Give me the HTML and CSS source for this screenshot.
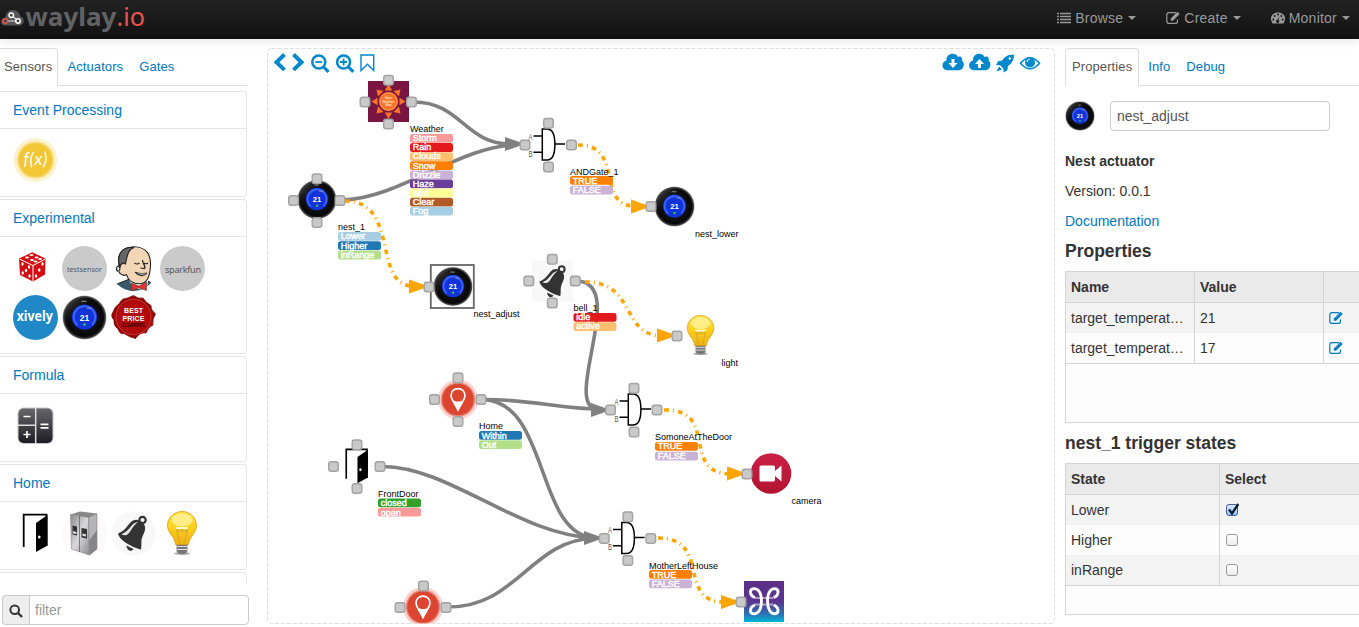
FILE: index.html
```html
<!DOCTYPE html>
<html lang="en">
<head>
<meta charset="utf-8">
<title>waylay.io</title>
<link rel="stylesheet" href="styles.css">
</head>
<body>
<svg class="defs" width="0" height="0" aria-hidden="true">
  <defs>
    <linearGradient id="gGlass" x1="0" y1="0" x2="0" y2="1"><stop offset="0" stop-color="#ffe24d"/><stop offset=".45" stop-color="#ffd21f"/><stop offset="1" stop-color="#efb010"/></linearGradient>
    <linearGradient id="gCalc" x1="0" y1="0" x2="0" y2="1"><stop offset="0" stop-color="#66666b"/><stop offset="1" stop-color="#1c1c22"/></linearGradient>
    <linearGradient id="gSteel" x1="0" y1="0" x2="1" y2="1"><stop offset="0" stop-color="#8a8a8c"/><stop offset=".5" stop-color="#d9d9db"/><stop offset="1" stop-color="#8b8b8d"/></linearGradient>
    <linearGradient id="gGift" x1="0" y1="0" x2="0" y2="1"><stop offset="0" stop-color="#5c2e87"/><stop offset=".5" stop-color="#5a3590"/><stop offset=".8" stop-color="#2e72b4"/><stop offset="1" stop-color="#00b6d9"/></linearGradient>
    <linearGradient id="gCam" x1="0" y1="0" x2="0" y2="1"><stop offset="0" stop-color="#cc2046"/><stop offset="1" stop-color="#b0142f"/></linearGradient>
    <radialGradient id="gNest"><stop offset="0" stop-color="#222"/><stop offset=".86" stop-color="#070707"/><stop offset=".95" stop-color="#444"/><stop offset="1" stop-color="#b5b5b5"/></radialGradient>
    <linearGradient id="gShine" x1="0" y1="0" x2="1" y2="1"><stop offset="0" stop-color="#888" stop-opacity=".75"/><stop offset=".4" stop-color="#222" stop-opacity="0"/></linearGradient>
    <radialGradient id="gSeal"><stop offset="0" stop-color="#c81414"/><stop offset="1" stop-color="#8f0606"/></radialGradient>

    <symbol id="nest" viewBox="0 0 45 45">
      <circle cx="22.5" cy="22.5" r="22" fill="url(#gNest)"/>
      <circle cx="22" cy="22" r="19.5" fill="url(#gShine)"/>
      <circle cx="22.5" cy="22" r="12.6" fill="#1233d8"/>
      <circle cx="22.5" cy="22" r="10.8" fill="none" stroke="#3a62ff" stroke-width="2" stroke-dasharray="52 16" transform="rotate(130 22.5 22)"/>
      <path d="M19.500 6.300h5M25 13.200h4.500" stroke="#999" stroke-width="1"/>
      <text x="22.5" y="25.5" class="nest-num">21</text>
      <circle cx="22.5" cy="29.5" r="1.3" fill="#35d045"/>
    </symbol>
    <symbol id="bulb" viewBox="0 0 45 45">
      <ellipse cx="22" cy="42.500" rx="8" ry="1.500" fill="#aaa"/>
      <path d="M16.500 33h11v7q-1 3-5.500 3t-5.500-3z" fill="#777"/>
      <path d="M16.500 35.500h11M16.500 38.500h11" stroke="#ddd" stroke-width="1"/>
      <path d="M22 .5C13.500 .5 7.500 7 7.500 14.500c0 8 7.500 11 8 19h13c.5-8 8-11 8-19C36.500 7 30.500 .5 22 .5z" fill="url(#gGlass)" stroke="#d9a010" stroke-width=".8"/>
      <ellipse cx="22" cy="9" rx="10.500" ry="6.500" fill="#fff5a5" opacity=".75"/>
      <path d="M19.500 32L16.500 18l3.500 3 2-3 2 3 3.500-3-3 14" fill="none" stroke="#c8a63a" stroke-width="1"/>
      <path d="M16 17h12" stroke="#fffad0" stroke-width="2"/>
    </symbol>
    <symbol id="bell" viewBox="0 0 45 45">
      <circle cx="31.500" cy="9" r="3.200" fill="none" stroke="#333" stroke-width="2.200"/>
      <path d="M7 22.500C13 20 15 17 18.500 12.500 22 8 27 7.500 31.500 11.500 36 16 34 20 31.500 25.500 29.500 30 31 34 30 38.500 23 37 8.500 30 7 22.500z" fill="#333"/>
      <path d="M10.500 23.200C16 21 18 17.500 22 13.200 24 11.500 26 11 27 11.200 23.500 13 20.500 18.500 18 22c-2 2.500-5 3-7.500 1.200z" fill="#e9e9e9"/>
      <path d="M15.500 34.500l7 3.500c-2 3.500-7 1.500-7-3.500z" fill="#333"/>
    </symbol>
    <symbol id="door" viewBox="0 0 45 45">
      <path d="M10.700 36V3.700H33.500V35" fill="none" stroke="#000" stroke-width="1.800"/>
      <path d="M23 12L34.500 4v30.500L23 41z" fill="#000"/><ellipse cx="26.300" cy="26" rx="1.300" ry="1.600" fill="#fff"/>
    </symbol>
    <symbol id="pin" viewBox="0 0 45 45">
      <circle cx="22.500" cy="22.500" r="22" fill="#f8d5d1"/><circle cx="22.500" cy="22.500" r="19" fill="#ec8b7f"/><circle cx="22.500" cy="22.500" r="17.300" fill="#dc452f"/>
      <path d="M22.500 10.500c-4.500 0-7.600 3.300-7.600 7.400 0 4.800 4 8.600 7.600 16.300 3.600-7.700 7.600-11.500 7.600-16.300 0-4.100-3.100-7.400-7.600-7.400z" fill="#dc452f" stroke="#fff" stroke-width="1.800"/>
      <path d="M16.500 22.500c2 3 10 3 12 0l-6 11.500z" fill="#fff"/>
    </symbol>
    <symbol id="gate" viewBox="-25 -25 50 50">
      <path d="M-6.700 -15.500H-2C3.500 -15.500 5.900 -9 5.900 0S3.500 15.500 -2 15.500H-6.700z" fill="#fff" stroke="#000" stroke-width="1.500"/>
      <path d="M-15.500 -8.500h9M-15.500 7.800h9M6 -.5h10" stroke="#000" stroke-width="1.500"/>
      <text x="-20.500" y="-5" class="pin-name" textLength="4" lengthAdjust="spacingAndGlyphs">A</text><text x="-20.500" y="12" class="pin-name" textLength="4" lengthAdjust="spacingAndGlyphs">B</text>
    </symbol>
    <symbol id="edit" viewBox="0 0 14 14">
      <path d="M10 1.700H3Q.8 1.700 .8 3.900V10.200Q.8 12.400 3 12.400H9.300Q11.500 12.400 11.500 10.200V8.500" fill="none" stroke="currentColor" stroke-width="1.200"/>
      <path d="M4.800 9.700V7.400L11.500 .7l2.200 2.200L7 9.700z" fill="currentColor"/><path d="M6.300 7.300l4.500-4.500" stroke="#fff" stroke-opacity=".5" stroke-width=".6"/>
    </symbol>
    <g id="port"><rect x="-4.800" y="-4.800" width="9.600" height="9.600" rx="2.500" fill="#c9c9c9" stroke="#a3a3a3" stroke-width="1.400"/></g>
    <g id="ports4"><use href="#port" x="-23.500"/><use href="#port" y="-21.700"/><use href="#port" x="23"/><use href="#port" y="22"/></g>
    <path id="head" d="M-20 -7V7L0 0z"/>
    <clipPath id="round"><circle cx="22.500" cy="22.500" r="22.500"/></clipPath>
  </defs>
</svg>

<header class="navbar">
  <svg class="logo" width="160" height="38" viewBox="0 0 160 38">
    <path d="M5 25.500C-.5 25.500 0 18 5.500 17.800 5.500 13 9 9.800 13 10c4 .1 6.800 3 7.300 6.500 5 1 4.400 9-1.800 9z" fill="#56565a"/>
    <path d="M5 21h13M11.500 15.500l6.500 5" stroke="#ddd" stroke-width="1.200"/>
    <circle cx="11.300" cy="15.200" r="2.200" fill="#444" stroke="#fff" stroke-width="1.500"/><circle cx="18" cy="21" r="2.200" fill="#444" stroke="#fff" stroke-width="1.500"/><circle cx="5.200" cy="21" r="2.300" fill="#444" stroke="#ee524f" stroke-width="1.500"/>
    <text x="25.500" y="25.500" class="brand" textLength="91" lengthAdjust="spacingAndGlyphs">waylay</text>
    <text x="116.500" y="25.500" class="brand-io" textLength="28.500" lengthAdjust="spacingAndGlyphs">.io</text>
  </svg>
  <nav class="menu">
    <a class="menu-item"><svg width="14" height="12" viewBox="0 0 14 12"><path d="M0 1.500h2M3 1.500h11M0 4.500h2M3 4.500h11M0 7.500h2M3 7.500h11M0 10.500h2M3 10.500h11" stroke="currentColor" stroke-width="1.700"/></svg><span>Browse</span><i class="caret"></i></a>
    <a class="menu-item"><svg width="14" height="14"><use href="#edit"/></svg><span>Create</span><i class="caret"></i></a>
    <a class="menu-item"><svg width="14" height="14" viewBox="0 0 14 14"><path d="M1.500 12.500C-3.200 4 4 1.500 7 1.500s10.200 2.500 5.500 11z" fill="currentColor"/><g fill="#1b1b1b"><circle cx="2.300" cy="8.500" r="1"/><circle cx="3.700" cy="5" r="1"/><circle cx="7" cy="3.500" r="1"/><circle cx="10.400" cy="5" r="1"/><circle cx="11.700" cy="8.500" r="1"/><path d="M8.500 5l-1 4a1.600 1.600 0 1 1-1-.2z"/></g></svg><span>Monitor</span><i class="caret"></i></a>
  </nav>
</header>

<main class="workspace">
  <aside class="library">
    <div class="tabs"><a class="tab active">Sensors</a><a class="tab">Actuators</a><a class="tab">Gates</a></div>
    <div class="groups">
      <section class="group">
        <h4>Event Processing</h4>
        <div class="icons">
          <svg viewBox="0 0 45 45"><circle cx="22.500" cy="22" r="22" fill="#fcf2cf"/><circle cx="22.500" cy="22" r="18.600" fill="#f7dd7d"/><circle cx="22.500" cy="22" r="16.800" fill="#f2c634"/><text x="22.500" y="27" class="fx" textLength="24">f(x)</text></svg>
        </div>
      </section>
      <section class="group">
        <h4>Experimental</h4>
        <div class="icons">
          <svg viewBox="0 0 45 45"><path d="M19.300 6.300L32.500 12.500 32 28.500 20 35.500 7 29 6 12.500z" fill="#d40d12"/><path d="M6.500 13L20 19.500V35M20 19.500L32.300 13" fill="none" stroke="#fff" stroke-width="1"/><g fill="#fff"><ellipse cx="14" cy="11.500" rx="2" ry="1"/><ellipse cx="18.500" cy="9" rx="2" ry="1"/><ellipse cx="19" cy="14" rx="2" ry="1"/><ellipse cx="23.500" cy="11.500" rx="2" ry="1"/><ellipse cx="22.500" cy="15.500" rx="2" ry="1"/><ellipse cx="27" cy="13" rx="2" ry="1"/><ellipse cx="9.500" cy="18" rx="1.200" ry="1.800"/><ellipse cx="16" cy="21" rx="1.200" ry="1.800"/><ellipse cx="13" cy="24.500" rx="1.200" ry="1.800"/><ellipse cx="9.700" cy="27" rx="1.200" ry="1.800"/><ellipse cx="16.500" cy="30" rx="1.200" ry="1.800"/><ellipse cx="29.500" cy="18" rx="1.200" ry="1.800"/><ellipse cx="26.300" cy="24" rx="1.200" ry="1.800"/><ellipse cx="23" cy="30" rx="1.200" ry="1.800"/></g></svg>
          <svg viewBox="0 0 45 45"><circle cx="22.500" cy="22.500" r="22.500" fill="#cacaca"/><text x="22.500" y="25.500" class="round-label tiny" textLength="35">testsensor</text></svg>
          <svg viewBox="0 0 45 45"><g clip-path="url(#round)"><path d="M3 45l3-7 10-4 6-2 15 3 8 5v6z" fill="#37596b" stroke="#222"/><path d="M18 34l5 9h13l1-9z" fill="#fff"/><path d="M9 23C4 8 12 1 23 .8c13 0 17 9 16.500 18-.3 12-4 19-11 19-6 0-11-3-13-9-5 2-9.500-3-6.500-5.800z" fill="#f3d6b5" stroke="#222" stroke-width="1.100"/><path d="M8.500 20C6 11 9 3 18 1.500l5 0C17 4 17 8 15.500 13l-1 5-2.500-1z" fill="#666" stroke="#222" stroke-width="1.100"/><path d="M10 21c-4-3-6 2-3 4.500M23.500 17q2.500 2 5 0M33 17q2 1.500 4 0M31.500 14c0 4 4 7 2 8.500l-4-.5M24 26c3 4 9 5 12 1" fill="none" stroke="#222" stroke-width="1.200"/><path d="M25 26.500q6 2 11 .5-4 4.500-11-.5z" fill="#fff" stroke="#222" stroke-width=".7"/></g><path d="M20.500 37l7.500 3 7.500-4v8.500l-7.500-2.500-7.500 3z" fill="#e33232" stroke="#333" stroke-width=".5"/></svg>
          <svg viewBox="0 0 45 45"><circle cx="22.500" cy="22.500" r="22.500" fill="#cacaca"/><text x="23" y="26.800" class="round-label" textLength="36">sparkfun</text></svg>
          <svg viewBox="0 0 45 45"><circle cx="22.500" cy="22.500" r="22.500" fill="#2188c7"/><text x="21.700" y="26" class="xively" textLength="36" lengthAdjust="spacingAndGlyphs">xively</text></svg>
          <svg><use href="#nest"/></svg>
          <svg viewBox="0 0 45 45"><path d="M22.500 .5Q27 4 32 3 35 8 40 10.500 39.500 15 44.500 19 41 24 42 30 37 32 35 38 29 37 24.500 43.500 18 42 13 38.500 9 40 7 34 2 30 3 25-1 21 2 17 4 11 8 9 11 3 15 3.500 19 2 22.500 .5z" fill="url(#gSeal)" stroke="#7a0505" stroke-width=".7"/><circle cx="22.500" cy="22" r="17.500" fill="none" stroke="#d43a3a" stroke-width="1"/><circle cx="22.500" cy="22" r="16" fill="#b30b0b"/><text x="22.500" y="18.300" class="seal" textLength="19">BEST</text><text x="22.500" y="25.500" class="seal" textLength="22">PRICE</text><text x="22.500" y="31.500" class="seal small" textLength="23">GUARANTEE</text></svg>
        </div>
      </section>
      <section class="group">
        <h4>Formula</h4>
        <div class="icons">
          <svg viewBox="0 0 45 45"><rect x="4.500" y="4.500" width="36" height="36.500" rx="6" fill="#c9c9cb"/><rect x="5.500" y="5.500" width="34" height="34.500" rx="5" fill="url(#gCalc)"/><path d="M22.700 5v36M5 22.200h17.700" stroke="#ddd" stroke-width="1.500"/><path d="M10.500 13.500h7M10.500 31.500h7M14 28v7M27.500 21.300h8M27.500 24.800h8" stroke="#fff" stroke-width="1.700"/></svg>
        </div>
      </section>
      <section class="group">
        <h4>Home</h4>
        <div class="icons">
          <svg><use href="#door"/></svg>
          <svg viewBox="0 0 45 45"><circle cx="22.500" cy="22.500" r="22.500" fill="#fcfafa"/><path d="M8.500 3.500L18 .5l17 2-8.500 4z" fill="#888"/><path d="M8.500 3.500L26.500 6.500 27.500 44 9.500 38z" fill="url(#gSteel)" stroke="#777" stroke-width=".5"/><path d="M26.500 6.500L35 2.500v35.500l-7.500 6z" fill="#b4b4b6" stroke="#777" stroke-width=".5"/><path d="M27 30l8-11v19l-7.500 6z" fill="#858588"/><path d="M17.500 5v36" stroke="#666" stroke-width=".8"/><path d="M10.500 14.500l4.500 1v9l-4.500-1zM19.500 17l5.500 1v9.500l-5.500-1z" fill="#333"/><path d="M11 20l3.500 1v2l-3.500-.5zM20.500 22.500l3.500.8v2.200l-3.500-.6z" fill="#ddd"/></svg>
          <svg viewBox="0 0 45 45"><circle cx="22.500" cy="22.500" r="22.200" fill="#f8f8f8"/><use href="#bell" width="45" height="45"/></svg>
          <svg><use href="#bulb"/></svg>
        </div>
      </section>
      <section class="group"><h4></h4></section>
    </div>
    <div class="filter"><span class="addon"><svg width="14" height="14" viewBox="0 0 14 14"><circle cx="5.700" cy="5.700" r="4.300" fill="none" stroke="#333" stroke-width="2"/><path d="M9 9l4 4" stroke="#333" stroke-width="2.400"/></svg></span><input type="text" placeholder="filter"></div>
  </aside>

  <svg class="canvas" width="788" height="576" viewBox="267 48 788 576">
    <rect x="267.500" y="48.500" width="787" height="575" rx="4" class="frame"/>
    <g class="tools">
      <path d="M284.500 54.500L276.500 62.200l8 7.700M293.500 54.500l8 7.700-8 7.700" stroke-width="4"/>
      <circle cx="318.800" cy="62" r="6.500" stroke-width="2.500"/><path d="M323.500 66.800l5 5" stroke-width="3.200"/><path d="M315.300 62h7" stroke-width="1.800"/>
      <circle cx="343.600" cy="62" r="6.500" stroke-width="2.500"/><path d="M348.300 66.800l5 5" stroke-width="3.200"/><path d="M340 62h7.200M343.600 58.400v7.200" stroke-width="1.800"/>
      <path d="M361 55h12.700v15.500l-6.300-6.200-6.400 6.200z" stroke-width="1.400"/>
    </g>
    <g class="solid">
      <path id="cloud" d="M947.500 70.200c-6.500 0-6.500-8.500-1-9.700C945.500 53 956 51.500 957.800 57c3-1.500 5 1 4.300 3.800 3.200 2 1.800 9.400-3 9.400z"/>
      <use href="#cloud" x="26.600"/>
      <path d="M951.500 59h3v4h3l-4.500 5-4.500-5h3zM978 68h3v-4h3l-4.500-5-4.500 5h3z" fill="#fff"/>
      <path d="M1014 54.500c-7-.3-9.500 3-12 6l-4 .8-2 3.700 4 .2 3.300 3.300.4 4 3.600-2.200.6-4c3-2.500 6.200-5.500 6.100-11.800zm-3 4a1.200 1.200 0 1 1 0-.1zM996.500 71.500l2.500-5 3 3z"/>
      <path d="M1020.500 63.200q9.500-11 19 0-9.500 11-19 0z" fill="#fff" stroke="#0088cc" stroke-width="1.600"/><circle cx="1030" cy="62.500" r="5"/><path d="M1027 62q.2-2.600 2.800-2.800" fill="none" stroke="#fff" stroke-width="1"/>
    </g>

    <g class="sprites">
      <rect x="368" y="81" width="41" height="41" fill="#7a1440"/>
      <g transform="translate(388.500 101.500)"><g fill="#fb7328"><path id="rays" d="M-3.800-11L0-17 3.800-11zM-3.800 11L0 17 3.800 11zM-11-3.800L-17 0-11 3.800zM11-3.800L17 0 11 3.800z"/><use href="#rays" transform="rotate(45)"/></g><circle r="10" fill="#fb7328" stroke="#7a1440" stroke-width="1"/><circle r="8.600" fill="none" stroke="#ffad78" stroke-width=".6"/><text class="owm" y="-2.200">Open</text><text class="owm" y="1">Weather</text><text class="owm" y="4.200">Map</text></g>
      <use href="#nest" x="297" y="179.500" width="40" height="40"/>
      <use href="#nest" x="654" y="186" width="41" height="41"/>
      <use href="#gate" x="524" y="119.500" width="50" height="50"/>
      <use href="#gate" x="610" y="384.500" width="50" height="50"/>
      <use href="#gate" x="603.500" y="513" width="50" height="50"/>
      <rect x="532" y="260.500" width="41" height="41" fill="#f8f8f8"/><use href="#bell" x="533" y="261" width="41" height="41"/>
      <use href="#bulb" x="680.500" y="315" width="41" height="41"/>
      <use href="#pin" x="437.500" y="379" width="41" height="41"/>
      <svg x="395" y="580" width="60" height="43.500" viewBox="395 580 60 43.500"><use href="#pin" x="402.500" y="586.500" width="41" height="41"/></svg>
      <use href="#door" x="336.500" y="446" width="41" height="41"/>
      <circle cx="771" cy="473.500" r="20.300" fill="url(#gCam)"/><path d="M761 465.500h12.500q1.500 0 1.500 1.500v4l6.500-5.500v16l-6.500-5.500v4q0 1.500-1.500 1.500h-12.500q-1.500 0-1.500-1.500v-13q0-1.500 1.500-1.500z" fill="#fff"/>
      <rect x="744" y="581" width="40" height="41" fill="url(#gGift)"/>
      <g fill="none" stroke="#fff" stroke-width="2.800"><path d="M755 598h18M755 604.500h18" opacity=".5" stroke-width="2"/><path d="M761.500 601C761.500 593 758.500 588.500 753.500 588.700c-4.500 .8-4 7 1.500 8.800M761.500 601C761.500 609 758.500 614 753.500 613.800c-4.500-.8-4-7 1.500-8.800M767.500 601C767.500 593 770.500 588.500 775 588.700c4.500 .8 4 7-1.500 8.800M767.500 601C767.500 609 770.500 614 775 613.800c4.500-.8 4-7-1.500-8.800"/></g>
      <rect x="430.800" y="265" width="43" height="43" fill="#fff" stroke="#666" stroke-width="1.800"/><use href="#nest" x="433" y="266.500" width="40" height="40"/>
    </g>

    <g class="flow">
      <path d="M414 102C460 102 466 144 510 144"/><path d="M343 200C400 198 460 146 515 145"/>
      <path d="M577 281C630 283 558 410 600 410"/><path d="M483 399.500C530 399 560 409 600 409"/>
      <path d="M483 399.500C550 402 535 535 595 538"/><path d="M383 466.500C450 467 520 536 595 538"/><path d="M448 607C518 607 530 540 595 538"/>
    </g>
    <g fill="#808080"><use href="#head" x="525" y="144"/><use href="#head" x="611" y="410"/><use href="#head" x="604" y="538"/></g>
    <g class="act">
      <path d="M345 201C400 201 372 284 412 286"/><path d="M578 145C625 145 595 206 635 206"/><path d="M585 282C637 282 620 335 662 336"/><path d="M664 410C720 409 680 473 730 474"/><path d="M658 538C712 538 676 602 724 602"/>
    </g>
    <g fill="#ffa500"><use href="#head" x="429" y="286.500"/><use href="#head" x="651" y="206.500"/><use href="#head" x="677" y="335.500"/><use href="#head" x="747" y="473.500"/><use href="#head" x="741" y="602"/></g>

    <g class="ports">
      <use href="#ports4" x="388.500" y="102"/><use href="#ports4" x="317" y="200.500"/><use href="#ports4" x="548.500" y="145"/><use href="#ports4" x="552.300" y="281"/><use href="#ports4" x="634" y="410"/><use href="#ports4" x="458" y="399.500"/><use href="#ports4" x="357" y="466.500"/><use href="#ports4" x="627.800" y="538.500"/>
      <use href="#port" x="400" y="607.500"/><use href="#port" x="423.500" y="586"/><use href="#port" x="446" y="607.500"/>
      <use href="#port" x="651" y="206.500"/><use href="#port" x="429" y="287"/><use href="#port" x="677" y="336"/><use href="#port" x="747" y="474"/><use href="#port" x="741" y="602"/>
    </g>

    <g class="tags">
      <g transform="translate(410 134)"><rect fill="#fb9a99"/><rect y="9.100" fill="#e31a1c"/><rect y="18.200" fill="#fdbf6f"/><rect y="27.300" fill="#ff7f00"/><rect y="36.400" fill="#cab2d6"/><rect y="45.500" fill="#6a3d9a"/><rect y="54.600" fill="#ffff99"/><rect y="63.700" fill="#b15928"/><rect y="72.800" fill="#a6cee3"/>
        <text y="7">Storm</text><text y="16.100">Rain</text><text y="25.200">Clouds</text><text y="34.900">Snow</text><text y="43.600">Drizzle</text><text y="52.900">Haze</text><text y="62">Mist</text><text y="71">Clear</text><text y="80">Fog</text></g>
      <g transform="translate(338 232)"><rect fill="#a6cee3"/><rect y="9.300" fill="#1f78b4"/><rect y="18.600" fill="#b2df8a"/><text y="7">Lower</text><text y="16.700">Higher</text><text y="26">inRange</text></g>
      <g transform="translate(570 176)"><rect fill="#ff7f00"/><rect y="9.800" fill="#cab2d6"/><text y="7.600">TRUE</text><text y="17">FALSE</text></g>
      <g transform="translate(573.500 313)"><rect fill="#e31a1c"/><rect y="9.300" fill="#fdbf6f"/><text y="7">idle</text><text y="16.300">active</text></g>
      <g transform="translate(479 431)"><rect fill="#1f78b4"/><rect y="9.300" fill="#b2df8a"/><text y="7.700">Within</text><text y="17">Out</text></g>
      <g transform="translate(378 498.500)"><rect fill="#33a02c"/><rect y="9.300" fill="#fb9a99"/><text y="7.700">closed</text><text y="17">open</text></g>
      <g transform="translate(655 442)"><rect fill="#ff7f00"/><rect y="9.800" fill="#cab2d6"/><text y="7.200">TRUE</text><text y="17">FALSE</text></g>
      <g transform="translate(649 570)"><rect fill="#ff7f00"/><rect y="9.500" fill="#cab2d6"/><text y="8">TRUE</text><text y="17">FALSE</text></g>
    </g>
    <g class="names">
      <text x="410" y="132">Weather</text><text x="338" y="230">nest_1</text><text x="570" y="175">ANDGate_1</text><text x="695" y="237">nest_lower</text><text x="473.500" y="317">nest_adjust</text><text x="573.500" y="311">bell_1</text><text x="721.500" y="366">light</text><text x="479" y="429">Home</text><text x="378" y="497">FrontDoor</text><text x="655" y="440">SomoneAtTheDoor</text><text x="791.500" y="504">camera</text><text x="649" y="569">MotherLeftHouse</text>
    </g>
  </svg>

  <aside class="details">
    <div class="tabs"><a class="tab active">Properties</a><a class="tab">Info</a><a class="tab">Debug</a></div>
    <div class="title-row"><svg width="30" height="30"><use href="#nest"/></svg><input type="text" value="nest_adjust"></div>
    <p><b>Nest actuator</b></p>
    <p>Version: 0.0.1</p>
    <p class="link">Documentation</p>
    <h3>Properties</h3>
    <div class="grid props">
      <div class="row head"><span>Name</span><span>Value</span><span></span></div>
      <div class="row"><span>target_temperat…</span><span>21</span><span class="link"><svg width="14" height="14"><use href="#edit"/></svg></span></div>
      <div class="row"><span>target_temperat…</span><span>17</span><span class="link"><svg width="14" height="14"><use href="#edit"/></svg></span></div>
      <div class="rest"></div>
    </div>
    <h3>nest_1 trigger states</h3>
    <div class="grid states">
      <div class="row head"><span>State</span><span>Select</span></div>
      <div class="row"><span>Lower</span><span><i class="check on"><svg width="14" height="14" viewBox="0 0 14 14"><path d="M3 6.500l3 4L12.300 1" fill="none" stroke="#0b1b35" stroke-width="2.300"/></svg></i></span></div>
      <div class="row"><span>Higher</span><span><i class="check"></i></span></div>
      <div class="row"><span>inRange</span><span><i class="check"></i></span></div>
      <div class="rest"></div>
    </div>
  </aside>
</main>
</body>
</html>
```
FILE: styles.css
```css
* { box-sizing: border-box; }
body { margin: 0; width: 1359px; height: 627px; overflow: hidden; background: #fff; color: #333; font: 14px/20px "Liberation Sans", Arial, sans-serif; }
.defs { position: absolute; }
svg { display: block; flex: none; }
text { font-family: "Liberation Sans", Arial, sans-serif; }

.navbar { display: flex; justify-content: space-between; height: 39px; background: linear-gradient(#222, #111); box-shadow: 0 1px 10px rgba(0, 0, 0, .12); }
.logo { overflow: visible; }
.brand { font-family: "Noto Sans", sans-serif; font-size: 25px; font-weight: 700; fill: #626265; }
.brand-io { font-family: "Noto Sans", sans-serif; font-size: 25px; fill: #ee524f; }
.menu { display: flex; align-items: center; gap: 30px; padding: 0 9px 3px 0; color: #999; }
.menu-item { display: flex; align-items: center; gap: 4px; letter-spacing: .23px; }
.caret { border: 4px solid transparent; border-top-color: #999; border-bottom: 0; margin-left: 1px; }

.workspace { display: flex; height: 588px; padding-top: 9px; }
.library { width: 267px; flex: none; }
.tabs { display: flex; height: 38px; border-bottom: 1px solid #ddd; font-size: 13px; letter-spacing: .1px; color: #0077c1; }
.tab { height: 38px; padding: 0 7px; line-height: 37px; margin-right: 2px; }
.tab.active { color: #555; background: #fff; border: 1px solid #ddd; border-bottom: 0; border-radius: 4px 4px 0 0; padding: 0 6px; line-height: 36px; }
.library .tabs { width: 247px; }
.library .tab.active { border-left: 0; border-top-left-radius: 0; padding: 0 5px 0 4px; }

.groups { width: 247px; height: 493px; overflow: hidden; margin-top: 5px; }
.group { border: 1px solid #e5e5e5; border-left: 0; border-radius: 0 4px 4px 0; margin-bottom: 2px; }
.group h4 { margin: 0; height: 37px; padding: 8px 13px; font: inherit; color: #0077c1; border-bottom: 1px solid #e5e5e5; }
.icons { display: flex; flex-wrap: wrap; gap: 4px; padding: 9px 12px 13px 13px; }
.icons svg { width: 45px; height: 45px; }
.nest-num { font-size: 8.5px; font-weight: bold; fill: #fff; text-anchor: middle; }
.fx { font-family: Lato, sans-serif; font-style: italic; font-size: 17px; fill: #fff; text-anchor: middle; }
.round-label { font-family: "Noto Sans", sans-serif; font-size: 9px; fill: #555; text-anchor: middle; }
.round-label.tiny { font-size: 7px; }
.xively { font-family: "Noto Sans", sans-serif; font-size: 13.500px; font-weight: 700; fill: #fff; text-anchor: middle; }
.seal { font-size: 7px; font-weight: bold; fill: #fff; text-anchor: middle; }
.seal.small { font-size: 4.5px; fill: #3b0000; }

.filter { display: flex; width: 247px; height: 30px; margin: 11px 0 0 2px; }
.addon { width: 27px; border: 1px solid #ccc; border-right: 0; border-radius: 4px 0 0 4px; background: #eee; padding: 8px 6px; }
input { font: inherit; color: #555; border: 1px solid #ccc; border-radius: 4px; padding: 4px 6px; outline: 0; background: #fff; }
.filter input { flex: 1; min-width: 0; border-radius: 0 4px 4px 0; padding-left: 5px; }
input::placeholder { color: #999; }

.frame { fill: none; stroke: #ddd; stroke-dasharray: 4 2; }
.tools { fill: none; stroke: #0088cc; }
.solid { fill: #0088cc; }
.owm { font-size: 3px; font-weight: bold; fill: #ffe2cc; text-anchor: middle; }
.pin-name { font-size: 8.500px; fill: #555; }
.flow { fill: none; stroke: #808080; stroke-width: 3.600; }
.act { fill: none; stroke: #ffa500; stroke-width: 3.600; stroke-dasharray: 4.600 4.200 1 4.200; }
.tags rect { width: 43px; height: 8.800px; rx: 2.500px; }
.tags text { font-size: 9px; fill: #fff; stroke: #fff; stroke-width: .4px; transform: translateX(2.800px); }
.names text { font-size: 9px; fill: #000; }

.details { width: 294px; flex: none; margin-left: 10px; }
.title-row { display: flex; align-items: center; gap: 15px; margin-top: 15px; height: 30px; }
.title-row input { width: 220px; height: 30px; }
.details p { margin: 0 0 10px; }
.title-row + p { margin-top: 20px; }
.link { color: #0077c1; }
h3 { margin: 0; font-size: 17.500px; line-height: 20px; height: 30px; }
.grid { width: 310px; border: 1px solid #d4d4d4; background: #fdfdfd; }
.props { height: 152px; margin-bottom: 10px; }
.states { height: 152px; }
.row { display: grid; height: 30px; line-height: 30px; }
.props .row { grid-template-columns: 129px 129px 1fr; }
.states .row { grid-template-columns: 154px 1fr; }
.row span { padding: 0 5px; border-right: 1px solid #d4d4d4; white-space: nowrap; }
.row span:last-child { border-right: 0; }
.row:nth-child(even) { background: #f3f3f3; }
.row.head { height: 31px; background: #eaeaea; border-bottom: 1px solid #d4d4d4; font-weight: bold; }
.row span svg { margin-top: 8px; }
.rest { border-top: 1px solid #d4d4d4; }
.check { display: block; width: 12px; height: 12px; margin: 9px 0 0 1px; border: 1px solid #999; border-radius: 3px; background: linear-gradient(#fff, #eee); }
.check.on { border-color: #4a5f9a; background: linear-gradient(#d6ecff, #8cc4f4); }
.check.on svg { margin: -2px 0 0 -1px; overflow: visible; }
```
